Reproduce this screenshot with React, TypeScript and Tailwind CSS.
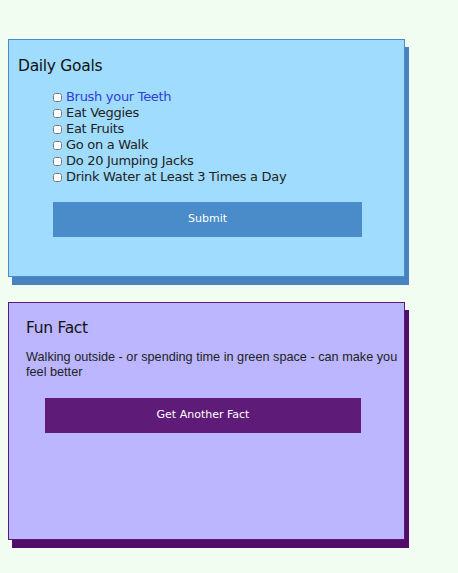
import { useState } from "react";

const GOALS = [
  "Brush your Teeth",
  "Eat Veggies",
  "Eat Fruits",
  "Go on a Walk",
  "Do 20 Jumping Jacks",
  "Drink Water at Least 3 Times a Day",
];

const FACTS = [
  "Walking outside - or spending time in green space - can make you feel better",
  "Drinking water helps your body stay cool and keeps your energy up",
];

const headFont = { fontFamily: '"DejaVu Sans", "Open Sans", sans-serif' };

export default function App() {
  const [checked, setChecked] = useState<boolean[]>(GOALS.map(() => false));
  const [fact, setFact] = useState(0);

  return (
    <div className="min-h-[573px] w-full bg-[#f2fdf2] pt-[39px] pl-2">
      {/* Daily goals card */}
      <div
        className="w-[397px] h-[238px] border border-[#4a8bc9] bg-[#a0dcfe] pl-[9px] pt-[16px] shadow-[4px_8px_0_#4682c0]"
        style={headFont}
      >
        <h2 className="text-[15.5px] text-[#111] leading-5 tracking-[-0.3px]">Daily Goals</h2>
        <ul className="mt-[13px] ml-[35px] text-[13px] leading-4 text-[#222] tracking-[-0.3px]">
          {GOALS.map((goal, i) => (
            <li key={goal} className="flex items-center">
              <input
                type="checkbox"
                checked={checked[i]}
                onChange={() => setChecked(checked.map((c, j) => (j === i ? !c : c)))}
                className="w-[9px] h-[9px] mr-[4px] accent-[#4a8bc9]"
              />
              <span className={i === 0 ? "text-[#2f3fd8]" : ""}>{goal}</span>
            </li>
          ))}
        </ul>
        <button className="mt-[17px] ml-[35px] w-[309px] h-[35px] bg-[#4a8bc9] text-white text-[11px]">
          Submit
        </button>
      </div>

      {/* Fun fact card */}
      <div className="mt-[25px] w-[397px] h-[238px] border border-[#5a1a7a] bg-[#bbb6ff] pl-[17px] pt-[15px] pr-1 shadow-[4px_8px_0_#520c6a]">
        <h2 className="text-[15.5px] text-[#111] leading-5 tracking-[-0.3px]" style={headFont}>
          Fun Fact
        </h2>
        <p
          className="mt-[12px] text-[12.7px] leading-[15px] text-[#222]"
          style={{ fontFamily: '"Liberation Sans", Arial, sans-serif' }}
        >
          {FACTS[fact]}
        </p>
        <button
          onClick={() => setFact((fact + 1) % FACTS.length)}
          className="mt-[18px] ml-[19px] w-[316px] h-[35px] bg-[#5e1c78] text-white text-[11px]"
          style={headFont}
        >
          Get Another Fact
        </button>
      </div>
    </div>
  );
}
